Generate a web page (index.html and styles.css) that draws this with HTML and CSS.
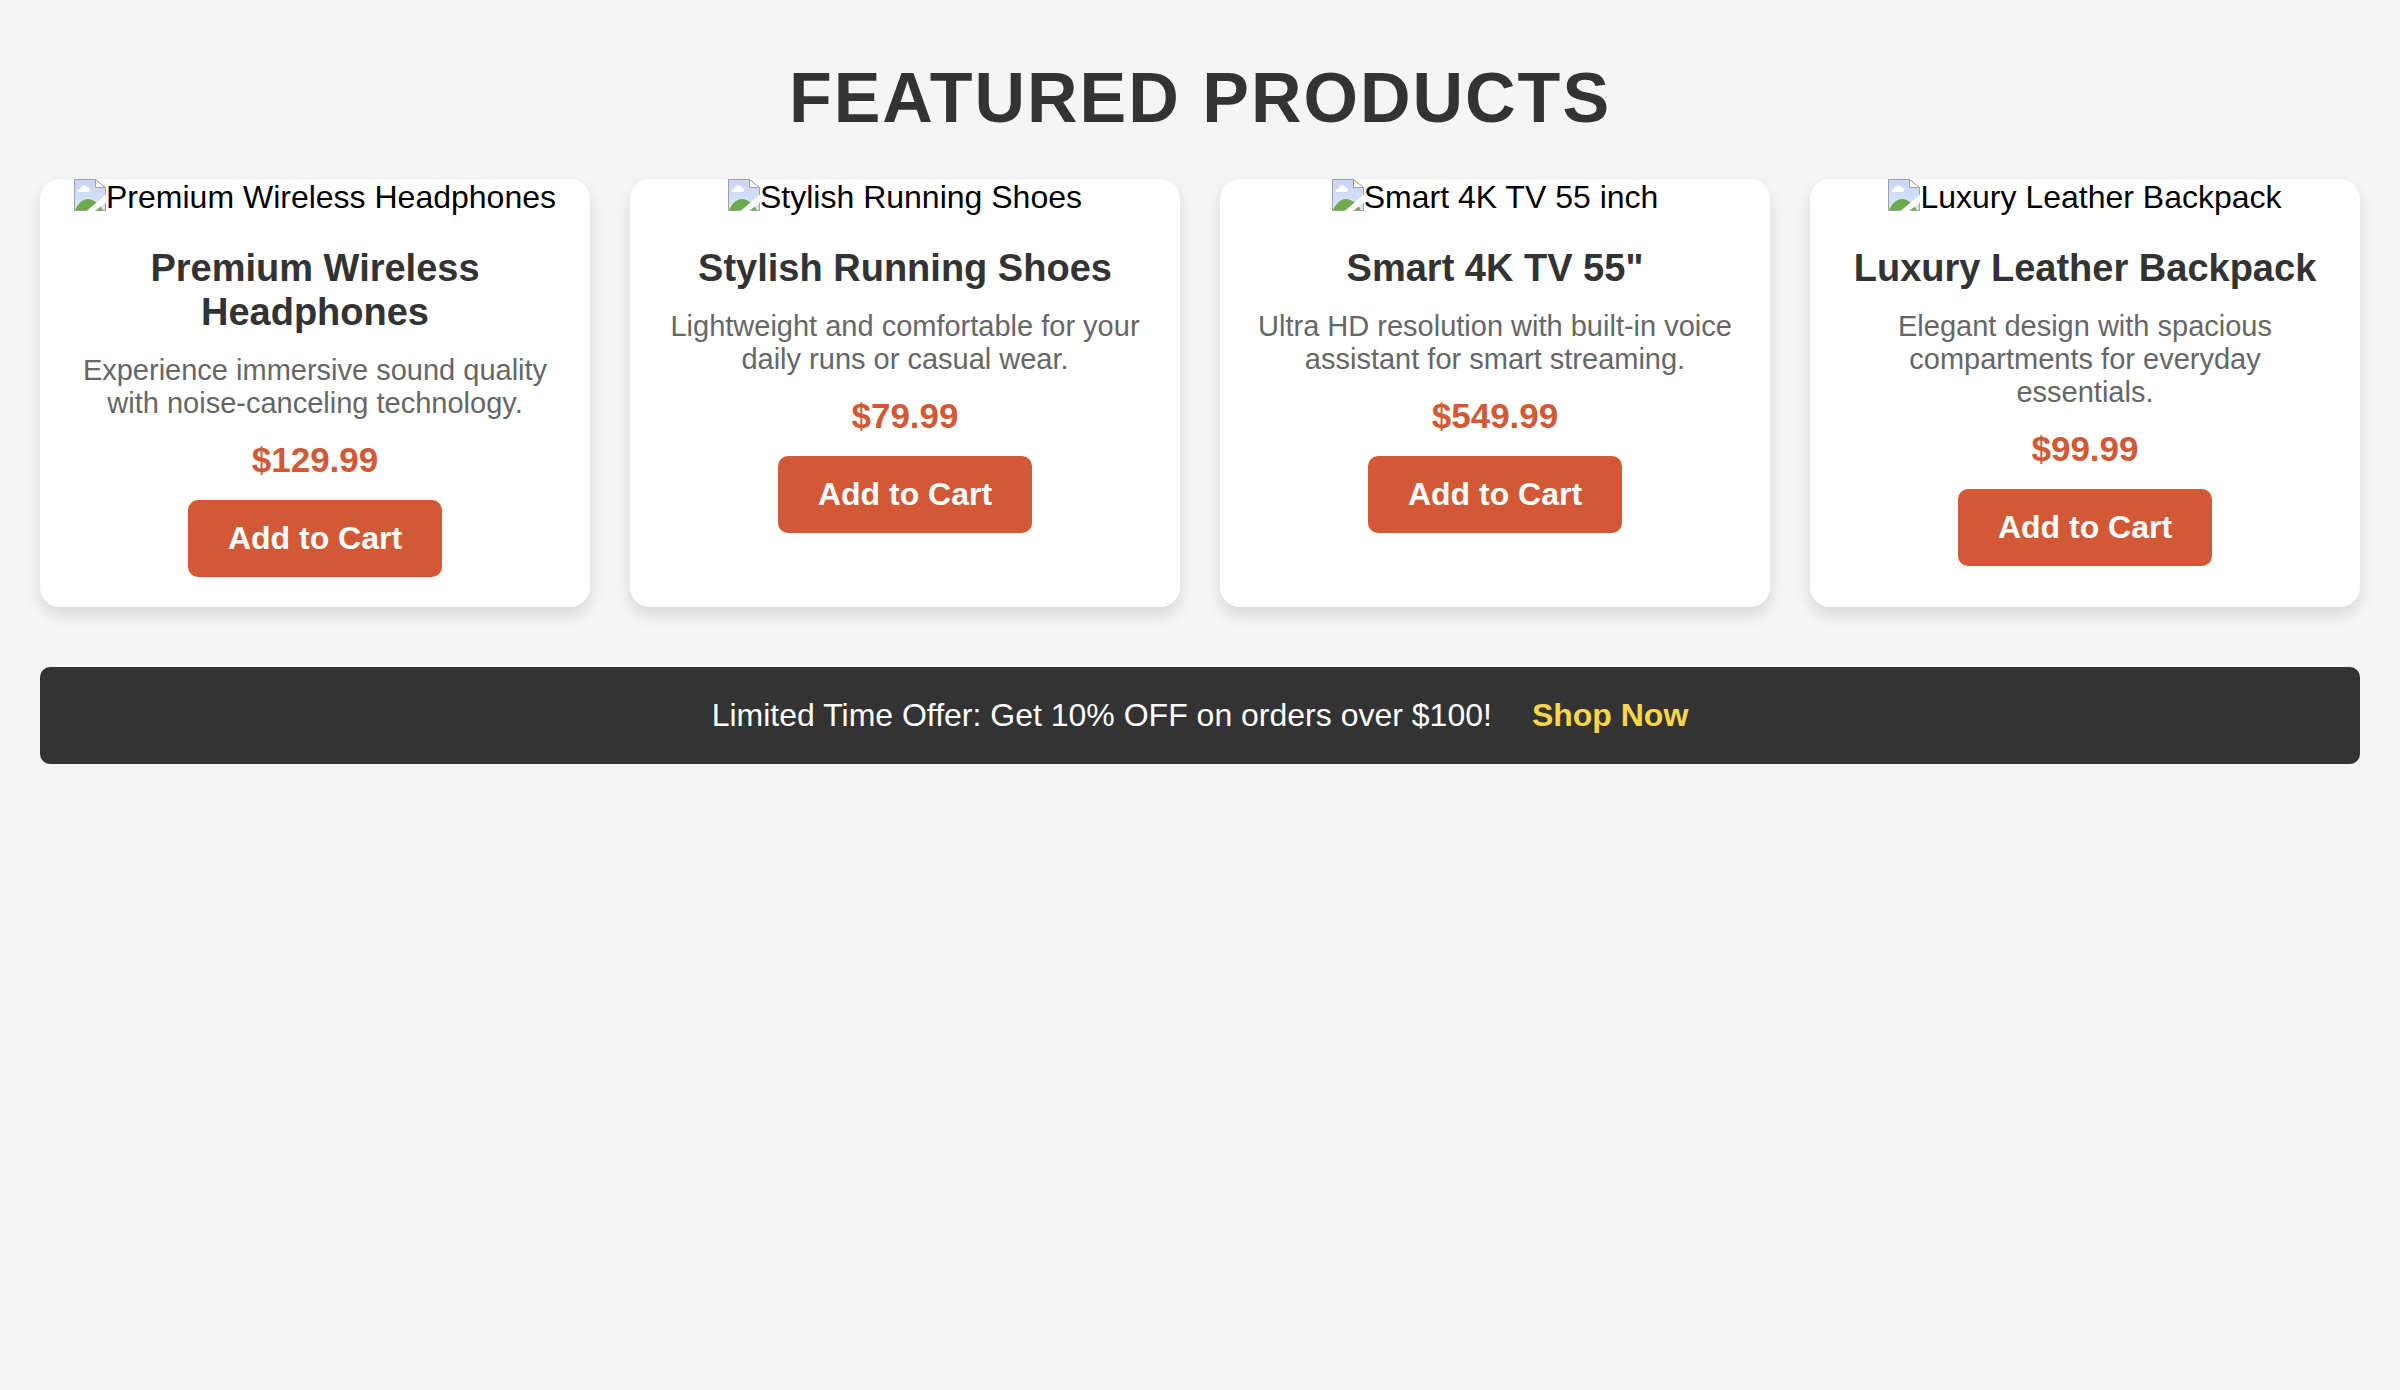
FILE: index.html
```html
<!DOCTYPE html>
<html lang="en">
<head>
<meta charset="utf-8">
<meta name="viewport" content="width=device-width, initial-scale=1">
<title>Featured Products</title>
<link rel="stylesheet" href="styles.css">
</head>
<body>
<svg class="sprite" aria-hidden="true">
  <defs>
    <linearGradient id="sky" x1="0" y1="0" x2="0" y2="1">
      <stop offset="0" stop-color="#c6d4f5"/>
      <stop offset="1" stop-color="#dbe6fb"/>
    </linearGradient>
  </defs>
  <symbol id="missing" viewBox="0 0 32 32">
    <path d="M0 0H21L32 9V32H0Z" fill="url(#sky)"/>
    <path d="M1 31C4 25 8 20 14 20C20 20 25 25 29 31Z" fill="#6cab4c"/>
    <path d="M5 13C3 13 3 10 6 10C7 6 12 5 13 8C16 8 17 13 14 13Z" fill="#fff"/>
    <path d="M.5 .5H21.500L31.500 9V31.500H.5Z" fill="none" stroke="#a0a0a0"/>
    <path d="M21.500 .5V8.500H31.500Z" fill="#fff" stroke="#a0a0a0"/>
    <path d="M32 15.500V23.500L21 32H12.500Z" fill="#fff"/>
  </symbol>
</svg>
<main class="page">
  <h1 class="heading">Featured Products</h1>
  <div class="products">
    <article class="card">
      <div class="picture"><svg class="picture-icon" aria-hidden="true"><use href="#missing"/></svg><span>Premium Wireless Headphones</span></div>
      <div class="details">
        <h2 class="name">Premium Wireless Headphones</h2>
        <p class="description">Experience immersive sound quality with noise-canceling technology.</p>
        <p class="price">$129.99</p>
        <button class="add" type="button">Add to Cart</button>
      </div>
    </article>
    <article class="card">
      <div class="picture"><svg class="picture-icon" aria-hidden="true"><use href="#missing"/></svg><span>Stylish Running Shoes</span></div>
      <div class="details">
        <h2 class="name">Stylish Running Shoes</h2>
        <p class="description">Lightweight and comfortable for your daily runs or casual wear.</p>
        <p class="price">$79.99</p>
        <button class="add" type="button">Add to Cart</button>
      </div>
    </article>
    <article class="card">
      <div class="picture"><svg class="picture-icon" aria-hidden="true"><use href="#missing"/></svg><span>Smart 4K TV 55 inch</span></div>
      <div class="details">
        <h2 class="name">Smart 4K TV 55"</h2>
        <p class="description">Ultra HD resolution with built-in voice assistant for smart streaming.</p>
        <p class="price">$549.99</p>
        <button class="add" type="button">Add to Cart</button>
      </div>
    </article>
    <article class="card">
      <div class="picture"><svg class="picture-icon" aria-hidden="true"><use href="#missing"/></svg><span>Luxury Leather Backpack</span></div>
      <div class="details">
        <h2 class="name">Luxury Leather Backpack</h2>
        <p class="description">Elegant design with spacious compartments for everyday essentials.</p>
        <p class="price">$99.99</p>
        <button class="add" type="button">Add to Cart</button>
      </div>
    </article>
  </div>
  <div class="offer">
    <span>Limited Time Offer: Get 10% OFF on orders over $100!</span>
    <a class="offer-link" href="#">Shop Now</a>
  </div>
</main>
</body>
</html>
```

FILE: styles.css
```css
* {
  box-sizing: border-box;
  margin: 0;
  padding: 0;
}

body {
  background: #f5f5f5;
  color: #000;
  font-family: "Liberation Sans", Arial, sans-serif;
  font-size: 32px;
  line-height: 37px;
}

.sprite {
  display: block;
  width: 0;
  height: 0;
}

.page {
  padding: 58px 40px 40px;
}

.heading {
  margin-bottom: 40px;
  color: #333;
  font-size: 70px;
  line-height: 81px;
  letter-spacing: 2px;
  text-align: center;
  text-transform: uppercase;
}

.products {
  display: grid;
  grid-template-columns: repeat(auto-fit, minmax(500px, 1fr));
  gap: 40px;
}

.card {
  overflow: hidden;
  border-radius: 20px;
  background: #fff;
  box-shadow: 0 8px 16px rgba(0, 0, 0, 0.12);
  text-align: center;
}

.picture {
  display: flex;
  justify-content: center;
}

.picture-icon {
  flex: none;
  width: 32px;
  height: 32px;
}

.details {
  padding: 30px;
}

.name {
  margin-bottom: 20px;
  color: #333;
  font-size: 38px;
  line-height: 44px;
}

.description {
  margin-bottom: 20px;
  color: #666;
  font-size: 29px;
  line-height: 33px;
}

.price {
  margin-bottom: 20px;
  color: #d35835;
  font-size: 35px;
  font-weight: bold;
  line-height: 40px;
}

.add {
  display: block;
  margin: 0 auto;
  padding: 20px 40px;
  border: 0;
  border-radius: 10px;
  background: #d35835;
  color: #fff;
  font: inherit;
  font-weight: bold;
  cursor: pointer;
}

.offer {
  display: flex;
  flex-wrap: wrap;
  justify-content: center;
  gap: 40px;
  margin-top: 60px;
  padding: 30px;
  border-radius: 10px;
  background: #333;
  color: #fff;
}

.offer-link {
  color: #fad648;
  font-weight: bold;
  text-decoration: none;
}
```
